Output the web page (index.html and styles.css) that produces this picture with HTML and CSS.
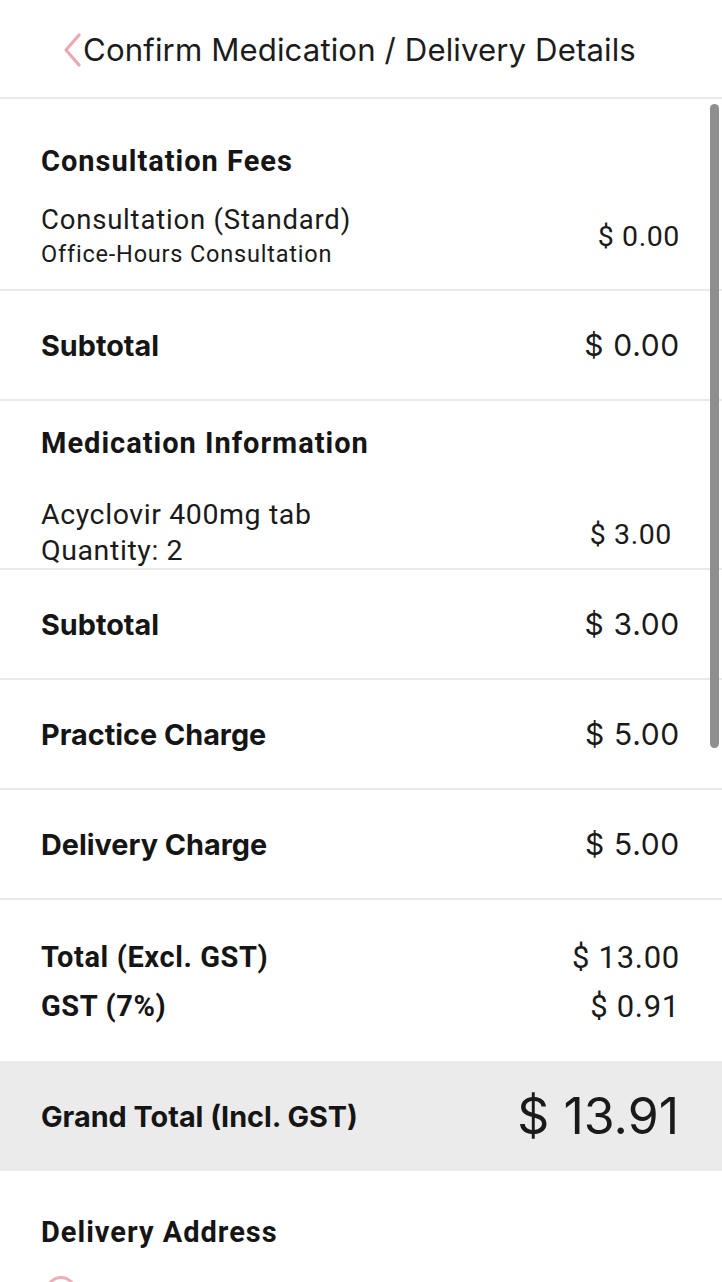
FILE: index.html
```html
<!DOCTYPE html>
<html lang="en">
<head>
<meta charset="utf-8">
<title>Confirm Medication / Delivery Details</title>
<link rel="stylesheet" href="styles.css">
</head>
<body>
<div class="screen">
  <header class="topbar">
    <svg class="back" width="20" height="34" viewBox="0 0 20 34"><path d="M17 2 L4 17 L17 32" fill="none" stroke="#eaa9b0" stroke-width="3.2" stroke-linecap="round" stroke-linejoin="round"/></svg>
    <h1 class="title">Confirm Medication / Delivery Details</h1>
  </header>

  <section class="block consult">
    <h2 class="sec-title">Consultation Fees</h2>
    <div class="item">
      <div class="item-text">
        <div class="item-name">Consultation (Standard)</div>
        <div class="item-sub">Office-Hours Consultation</div>
      </div>
      <div class="item-price">$ 0.00</div>
    </div>
  </section>

  <div class="row"><span class="row-label">Subtotal</span><span class="row-value">$ 0.00</span></div>

  <section class="block med">
    <h2 class="sec-title">Medication Information</h2>
    <div class="item med-item">
      <div class="item-text">
        <div class="item-name big">Acyclovir 400mg tab</div>
        <div class="item-qty">Quantity: 2</div>
      </div>
      <div class="item-price inset">$ 3.00</div>
    </div>
  </section>

  <div class="row"><span class="row-label">Subtotal</span><span class="row-value">$ 3.00</span></div>
  <div class="row"><span class="row-label">Practice Charge</span><span class="row-value">$ 5.00</span></div>
  <div class="row"><span class="row-label">Delivery Charge</span><span class="row-value">$ 5.00</span></div>

  <section class="totals">
    <div class="tot-row"><span class="tot-label">Total (Excl. GST)</span><span class="tot-value">$ 13.00</span></div>
    <div class="tot-row"><span class="tot-label">GST (7%)</span><span class="tot-value">$ 0.91</span></div>
  </section>

  <div class="grand"><span class="grand-label">Grand Total (Incl. GST)</span><span class="grand-value">$ 13.91</span></div>

  <section class="address">
    <h2 class="sec-title">Delivery Address</h2>
    <div class="radio"></div>
  </section>

  <div class="scrollbar"></div>
</div>
</body>
</html>
```

FILE: styles.css
```css
* { box-sizing: border-box; }
html, body { margin: 0; padding: 0; background: #fff; }
body { width: 722px; height: 1282px; overflow: hidden; color: #151515; font-family: Roboto, "Liberation Sans", sans-serif; }

.screen { position: relative; width: 722px; height: 1282px; overflow: hidden; }

.topbar {
  height: 99px;
  border-bottom: 2px solid #e6eaee;
  display: flex;
  align-items: center;
  justify-content: center;
  gap: 1px;
  padding-top: 2px;
  padding-right: 24px;
}
.back { display: block; flex: none; }
.title {
  margin: 0;
  font-family: Inter, "Noto Sans", sans-serif;
  font-weight: 400;
  font-size: 31.2px;
  letter-spacing: 0.1px;
  color: #1c1c1c;
  white-space: nowrap;
}

.block { border-bottom: 2px solid #e8ebee; padding: 0 43px 0 41px; }
.consult { height: 192px; padding-top: 45px; }
.med { height: 169px; padding-top: 25px; }

.sec-title {
  margin: 0;
  font-family: Roboto, sans-serif;
  font-weight: 700;
  font-size: 29px;
  letter-spacing: 1px;
  line-height: 34px;
  color: #151515;
}

.item { display: flex; justify-content: space-between; align-items: center; }
.consult .item { margin-top: 24px; }
.med-item { margin-top: 37px; }

.item-name { font-size: 27.5px; letter-spacing: 0.8px; line-height: 35px; color: #1a1a1a; }
.item-name.big { font-size: 28.5px; letter-spacing: 0.6px; line-height: 36px; }
.item-sub { font-size: 23.5px; letter-spacing: 0.8px; line-height: 34px; color: #1a1a1a; }
.item-qty { font-size: 28.5px; letter-spacing: 0.6px; line-height: 36px; color: #1a1a1a; }
.item-price { font-size: 28.5px; letter-spacing: 0.6px; color: #1a1a1a; margin-right: -1px; }
.item-price.inset { margin-right: 7px; margin-top: 2px; }

.row {
  height: 110px;
  border-bottom: 2px solid #e8ebee;
  display: flex;
  justify-content: space-between;
  align-items: center;
  padding: 0 43px 0 41px;
}
.row-label {
  font-family: Inter, sans-serif;
  font-weight: 700;
  font-size: 28.8px;
  color: #151515;
}
.row-value {
  font-family: Inter, sans-serif;
  font-weight: 400;
  font-size: 30px;
  letter-spacing: 0.7px;
  color: #1a1a1a;
  margin-right: -1px;
}

.totals { padding: 37px 43px 35px 41px; display: flex; flex-direction: column; gap: 9px; height: 161px; }
.tot-row { display: flex; justify-content: space-between; align-items: center; height: 40px; }
.tot-label { font-weight: 700; font-size: 29px; letter-spacing: 0.6px; color: #151515; }
.tot-value { font-size: 31px; letter-spacing: 0.7px; color: #1a1a1a; margin-right: -1px; }

.grand {
  height: 110px;
  background: #ebebeb;
  display: flex;
  justify-content: space-between;
  align-items: center;
  padding: 0 43px 0 41px;
}
.grand-label { font-family: Inter, sans-serif; font-weight: 700; font-size: 28.8px; color: #151515; }
.grand-value { font-family: Inter, sans-serif; font-weight: 400; font-size: 50px; color: #1a1a1a; }

.address { padding: 44px 41px 0; }
.radio {
  margin-top: 27px;
  margin-left: 4px;
  width: 32px;
  height: 32px;
  border: 3px solid #eab0b6;
  border-radius: 50%;
}

.scrollbar {
  position: absolute;
  top: 104px;
  right: 3px;
  width: 9px;
  height: 644px;
  background: #8f8f8f;
  border-radius: 5px;
}
```
